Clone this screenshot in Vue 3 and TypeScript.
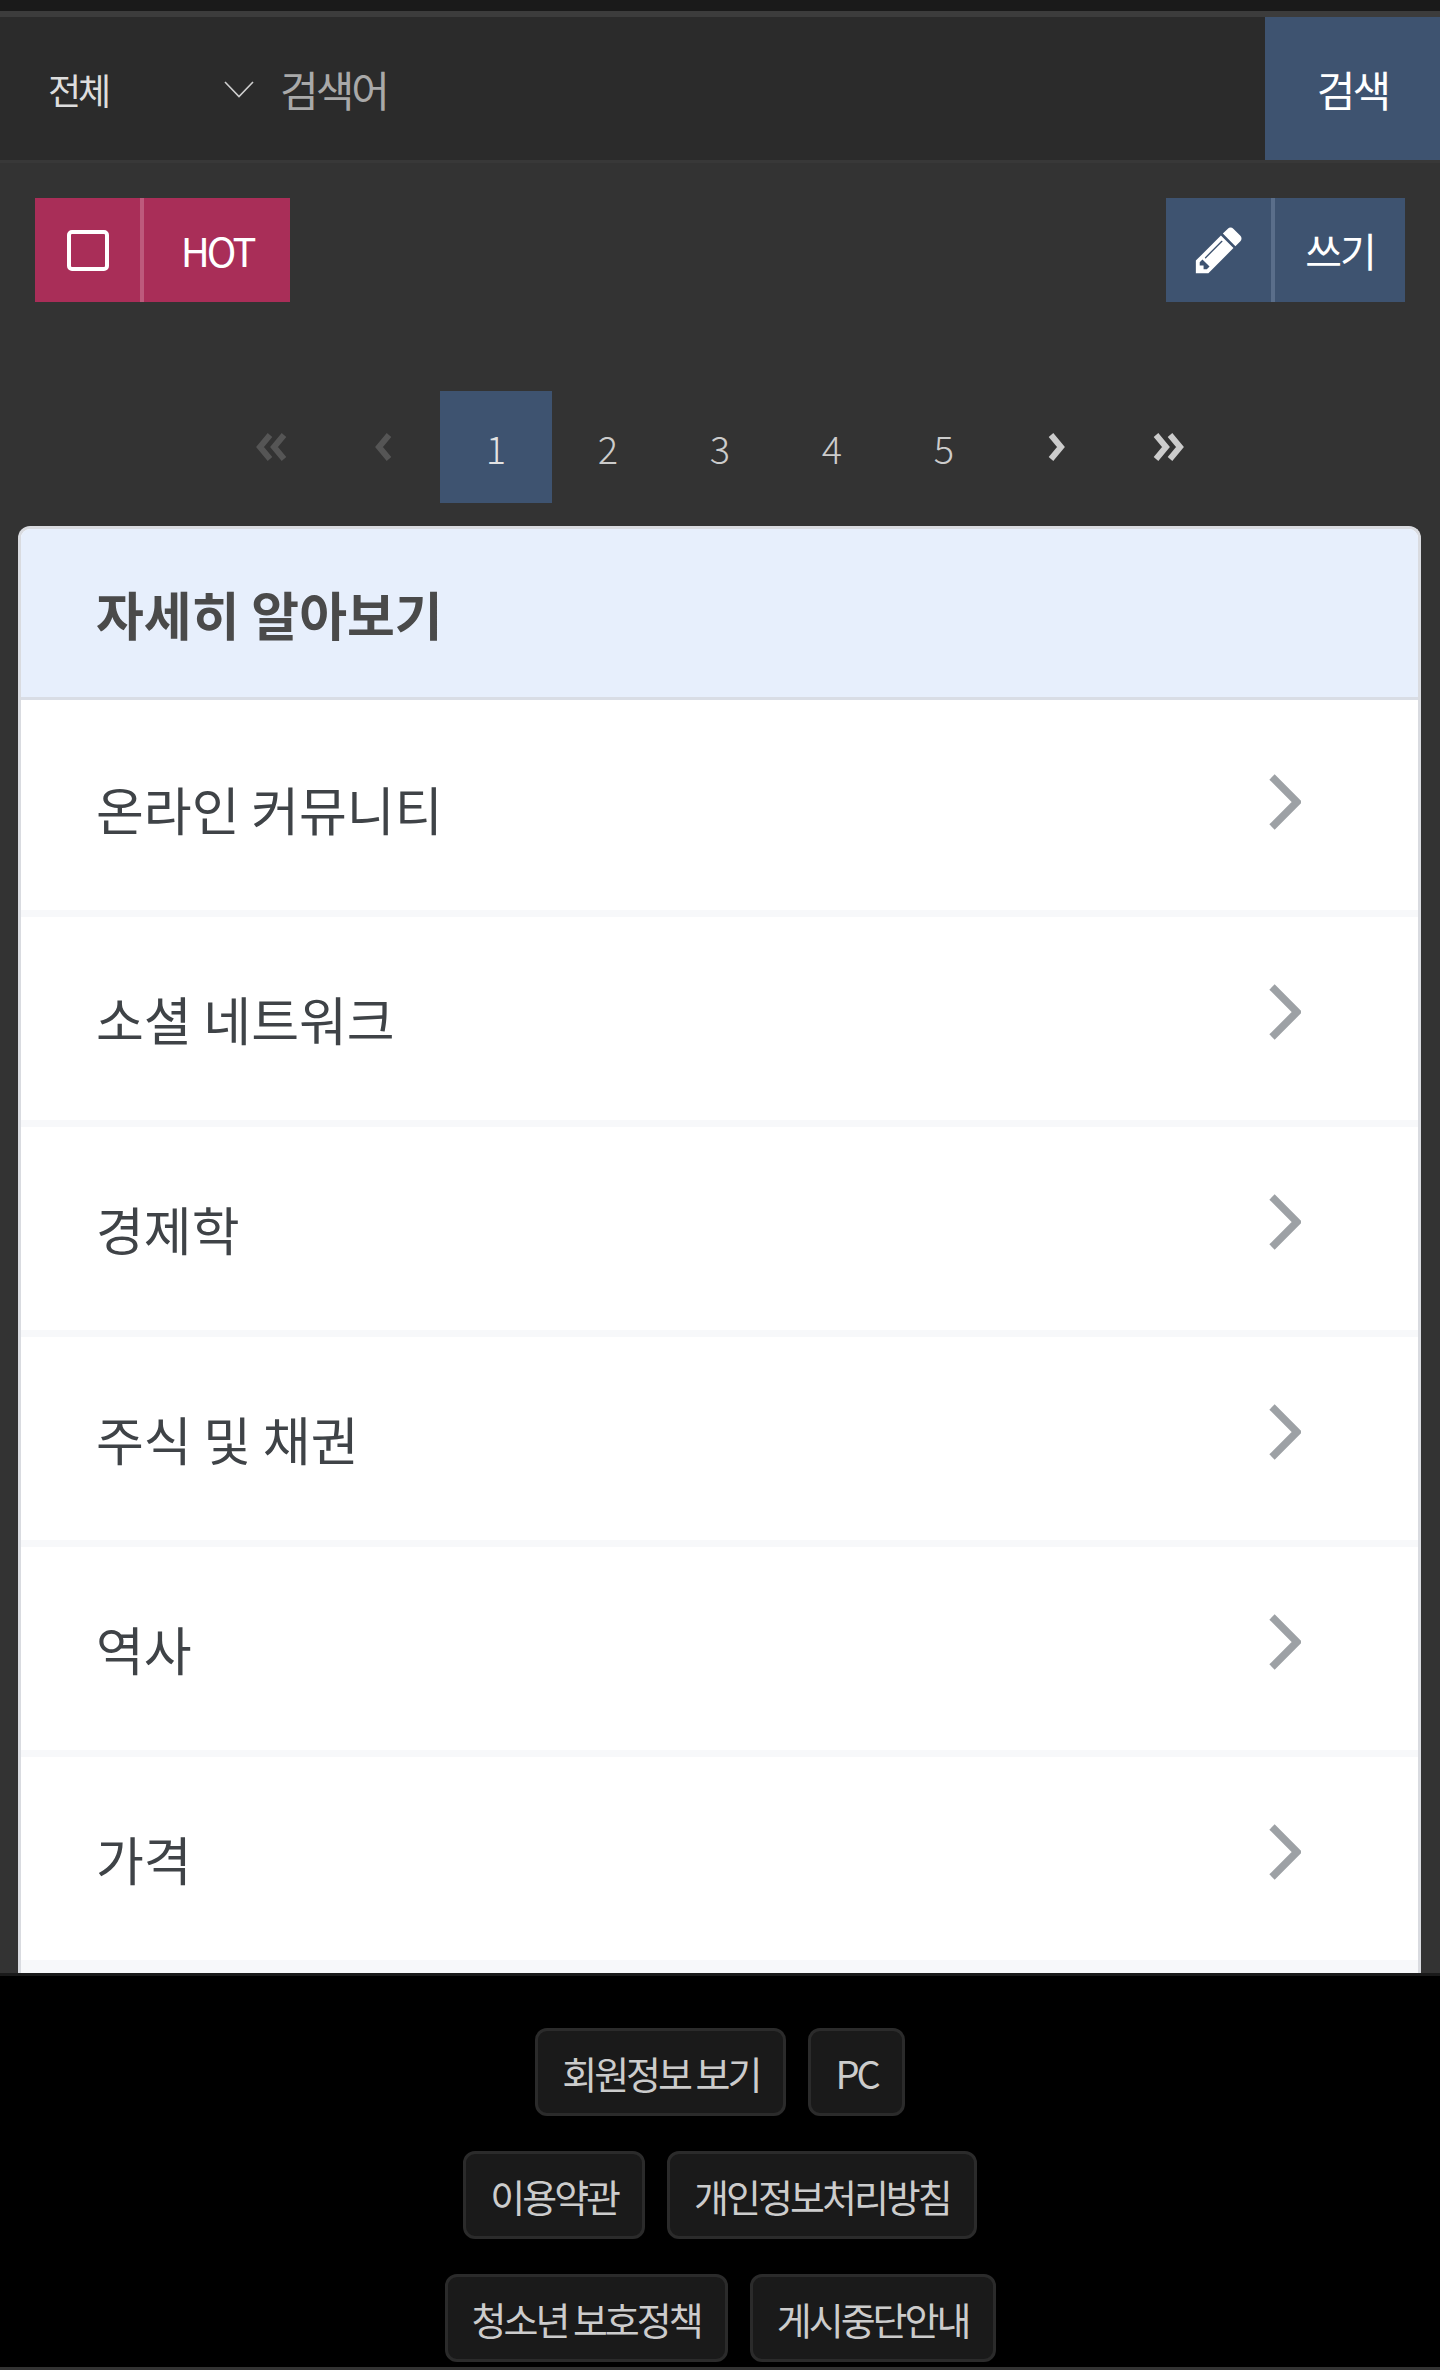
<script setup lang="ts">
type PageCell = {
  label: string;
  active?: boolean;
};

const pages: PageCell[] = [
  { label: '1', active: true },
  { label: '2' },
  { label: '3' },
  { label: '4' },
  { label: '5' },
];

const topics = ['온라인 커뮤니티', '소셜 네트워크', '경제학', '주식 및 채권', '역사', '가격'];

const footerRows = [
  ['회원정보 보기', 'PC'],
  ['이용약관', '개인정보처리방침'],
  ['청소년 보호정책', '게시중단안내'],
];
</script>

<template>
  <div class="page">
    <div class="top-strip"></div>

    <form class="search" @submit.prevent>
      <div class="select">
        <span>전체</span>
        <svg class="select-arrow" viewBox="0 0 30 17" width="30" height="17">
          <polyline points="1,1 15,15.5 29,1" fill="none" stroke="#cfcfcf" stroke-width="1.6" />
        </svg>
      </div>
      <input class="search-input" type="text" placeholder="검색어" />
      <button class="search-btn" type="submit">검색</button>
    </form>

    <div class="toolbar">
      <div class="action hot">
        <span class="action-icon"><span class="checkbox"></span></span>
        <span class="action-label hot-label">HOT</span>
      </div>
      <div class="action write">
        <span class="action-icon">
          <svg viewBox="0 0 1792 1792" width="54" height="54" fill="#fff">
            <path d="M491 1536l91-91-235-235-91 91v107h128v128h107zm523-928q0-22-22-22-10 0-17 7l-542 542q-7 7-7 17 0 22 22 22 10 0 17-7l542-542q7-7 7-17zm-54-192l416 416-832 832h-416v-416zm683 96q0 53-37 90l-166 166-416-416 166-165q36-38 90-38 53 0 91 38l235 234q37 39 37 91z" />
          </svg>
        </span>
        <span class="action-label write-label">쓰기</span>
      </div>
    </div>

    <nav class="pager">
      <a class="cell off">
        <svg viewBox="0 0 36 28" width="36" height="28"><path d="M16 2 6 14l10 12M30 2 20 14l10 12" /></svg>
      </a>
      <a class="cell off">
        <svg viewBox="0 0 20 28" width="20" height="28"><path d="M15 2 5 14l10 12" /></svg>
      </a>
      <a v-for="p in pages" :key="p.label" class="cell" :class="{ current: p.active }">{{ p.label }}</a>
      <a class="cell">
        <svg viewBox="0 0 20 28" width="20" height="28"><path d="M5 2l10 12L5 26" /></svg>
      </a>
      <a class="cell">
        <svg viewBox="0 0 36 28" width="36" height="28"><path d="M6 2l10 12L6 26M20 2l10 12-10 12" /></svg>
      </a>
    </nav>

    <section class="card">
      <h2 class="card-title">자세히 알아보기</h2>
      <ul class="topics">
        <li v-for="topic in topics" :key="topic" class="topic">
          <span>{{ topic }}</span>
          <svg class="topic-arrow" viewBox="0 0 32 56" width="32" height="56">
            <polyline points="3,3 28,28 3,53" fill="none" stroke="#9da1a5" stroke-width="7.5" />
          </svg>
        </li>
      </ul>
    </section>

    <footer class="footer">
      <div v-for="(row, i) in footerRows" :key="i" class="footer-row">
        <a v-for="link in row" :key="link" class="footer-btn">{{ link }}</a>
      </div>
    </footer>
  </div>
</template>

<style>
body {
  background: #000;
}
</style>

<style scoped>
.page {
  font-family: "Noto Sans CJK KR", "Noto Sans", sans-serif;
  background: #333;
  height: 2370px;
  overflow: hidden;
}

.top-strip {
  height: 11px;
  background: #1a1a1a;
  border-bottom: 6px solid #3c3c3c;
}

.search {
  display: flex;
  height: 143px;
  background: #2b2b2b;
  border-bottom: 3px solid #383838;
  box-sizing: content-box;
}

.select {
  width: 254px;
  box-sizing: border-box;
  padding-left: 48px;
  display: flex;
  align-items: center;
  justify-content: space-between;
  color: #ddd;
  font-size: 36px;
  letter-spacing: -3px;
}

.select-arrow {
  margin-top: 2px;
}

.search-input {
  flex: 1;
  min-width: 0;
  margin: 0;
  padding: 0 0 0 26px;
  border: 0;
  outline: 0;
  background: transparent;
  font: inherit;
  font-size: 42px;
  letter-spacing: -3px;
  color: #ddd;
}

.search-input::placeholder {
  color: #a9a9a9;
  opacity: 1;
}

.search-btn {
  width: 175px;
  margin: 0;
  padding: 0;
  border: 0;
  background: #3e5370;
  color: #fff;
  font: inherit;
  font-size: 42px;
  letter-spacing: -3px;
}

.toolbar {
  display: flex;
  justify-content: space-between;
  padding: 35px 35px 0;
}

.action {
  display: flex;
  height: 104px;
  color: #fff;
  font-size: 40px;
}

.action-icon {
  width: 105px;
  display: flex;
  align-items: center;
  justify-content: center;
  border-right: 4px solid;
  box-sizing: content-box;
}

.action-label {
  display: flex;
  align-items: center;
  justify-content: center;
}

.hot {
  background: #a92e58;
}

.hot .action-icon {
  border-right-color: #bd5a7c;
}

.hot-label {
  width: 146px;
  letter-spacing: -3px;
}

.write {
  background: #3e5370;
}

.write .action-icon {
  border-right-color: #5a6e8a;
}

.write-label {
  width: 130px;
  letter-spacing: -2px;
}

.checkbox {
  width: 42px;
  height: 41px;
  box-sizing: border-box;
  border: 4px solid #fff;
  border-radius: 5px;
}

.pager {
  display: flex;
  justify-content: center;
  margin-top: 89px;
}

.cell {
  width: 112px;
  height: 112px;
  display: flex;
  align-items: center;
  justify-content: center;
  color: #ccc;
  font-size: 38px;
  font-weight: 300;
}

.cell svg {
  fill: none;
  stroke: #ccc;
  stroke-width: 6;
}

.cell.off svg {
  stroke: #555;
}

.cell.current {
  background: #3e5370;
  color: #e2e2e2;
}

.card {
  margin: 23px 19px 0 18px;
  border: 3px solid #d9dbe0;
  border-bottom: 0;
  border-radius: 12px 12px 0 0;
  background: #fff;
  overflow: hidden;
}

.card-title {
  margin: 0;
  height: 168px;
  padding-left: 75px;
  display: flex;
  align-items: center;
  background: #e7effc;
  border-bottom: 3px solid #d9dde5;
  color: #4a4a4a;
  font-size: 52px;
  font-weight: 700;
}

.topics {
  margin: 0;
  padding: 0 0 13px;
  list-style: none;
  background: #f7f8fa;
}

.topic {
  margin-top: 7px;
  height: 203px;
  padding: 0 117px 0 75px;
  display: flex;
  align-items: center;
  justify-content: space-between;
  background: #fff;
  color: #3f4347;
  font-size: 52px;
}

.topic + .topic {
  margin-top: 7px;
}

.topic-arrow {
  margin-top: -14px;
}

.footer {
  height: 394px;
  box-sizing: border-box;
  padding-top: 52px;
  background: #000;
  border-top: 3px solid #1a1a1a;
  display: flex;
  flex-direction: column;
  gap: 35px;
}

.footer-row {
  display: flex;
  justify-content: center;
  gap: 22px;
}

.footer-btn {
  height: 88px;
  box-sizing: border-box;
  padding: 0 24px;
  display: flex;
  align-items: center;
  background: #1a1a1a;
  border: 3px solid #2b2b2b;
  border-radius: 12px;
  color: #ccc;
  font-size: 38px;
  letter-spacing: -3px;
}
</style>
